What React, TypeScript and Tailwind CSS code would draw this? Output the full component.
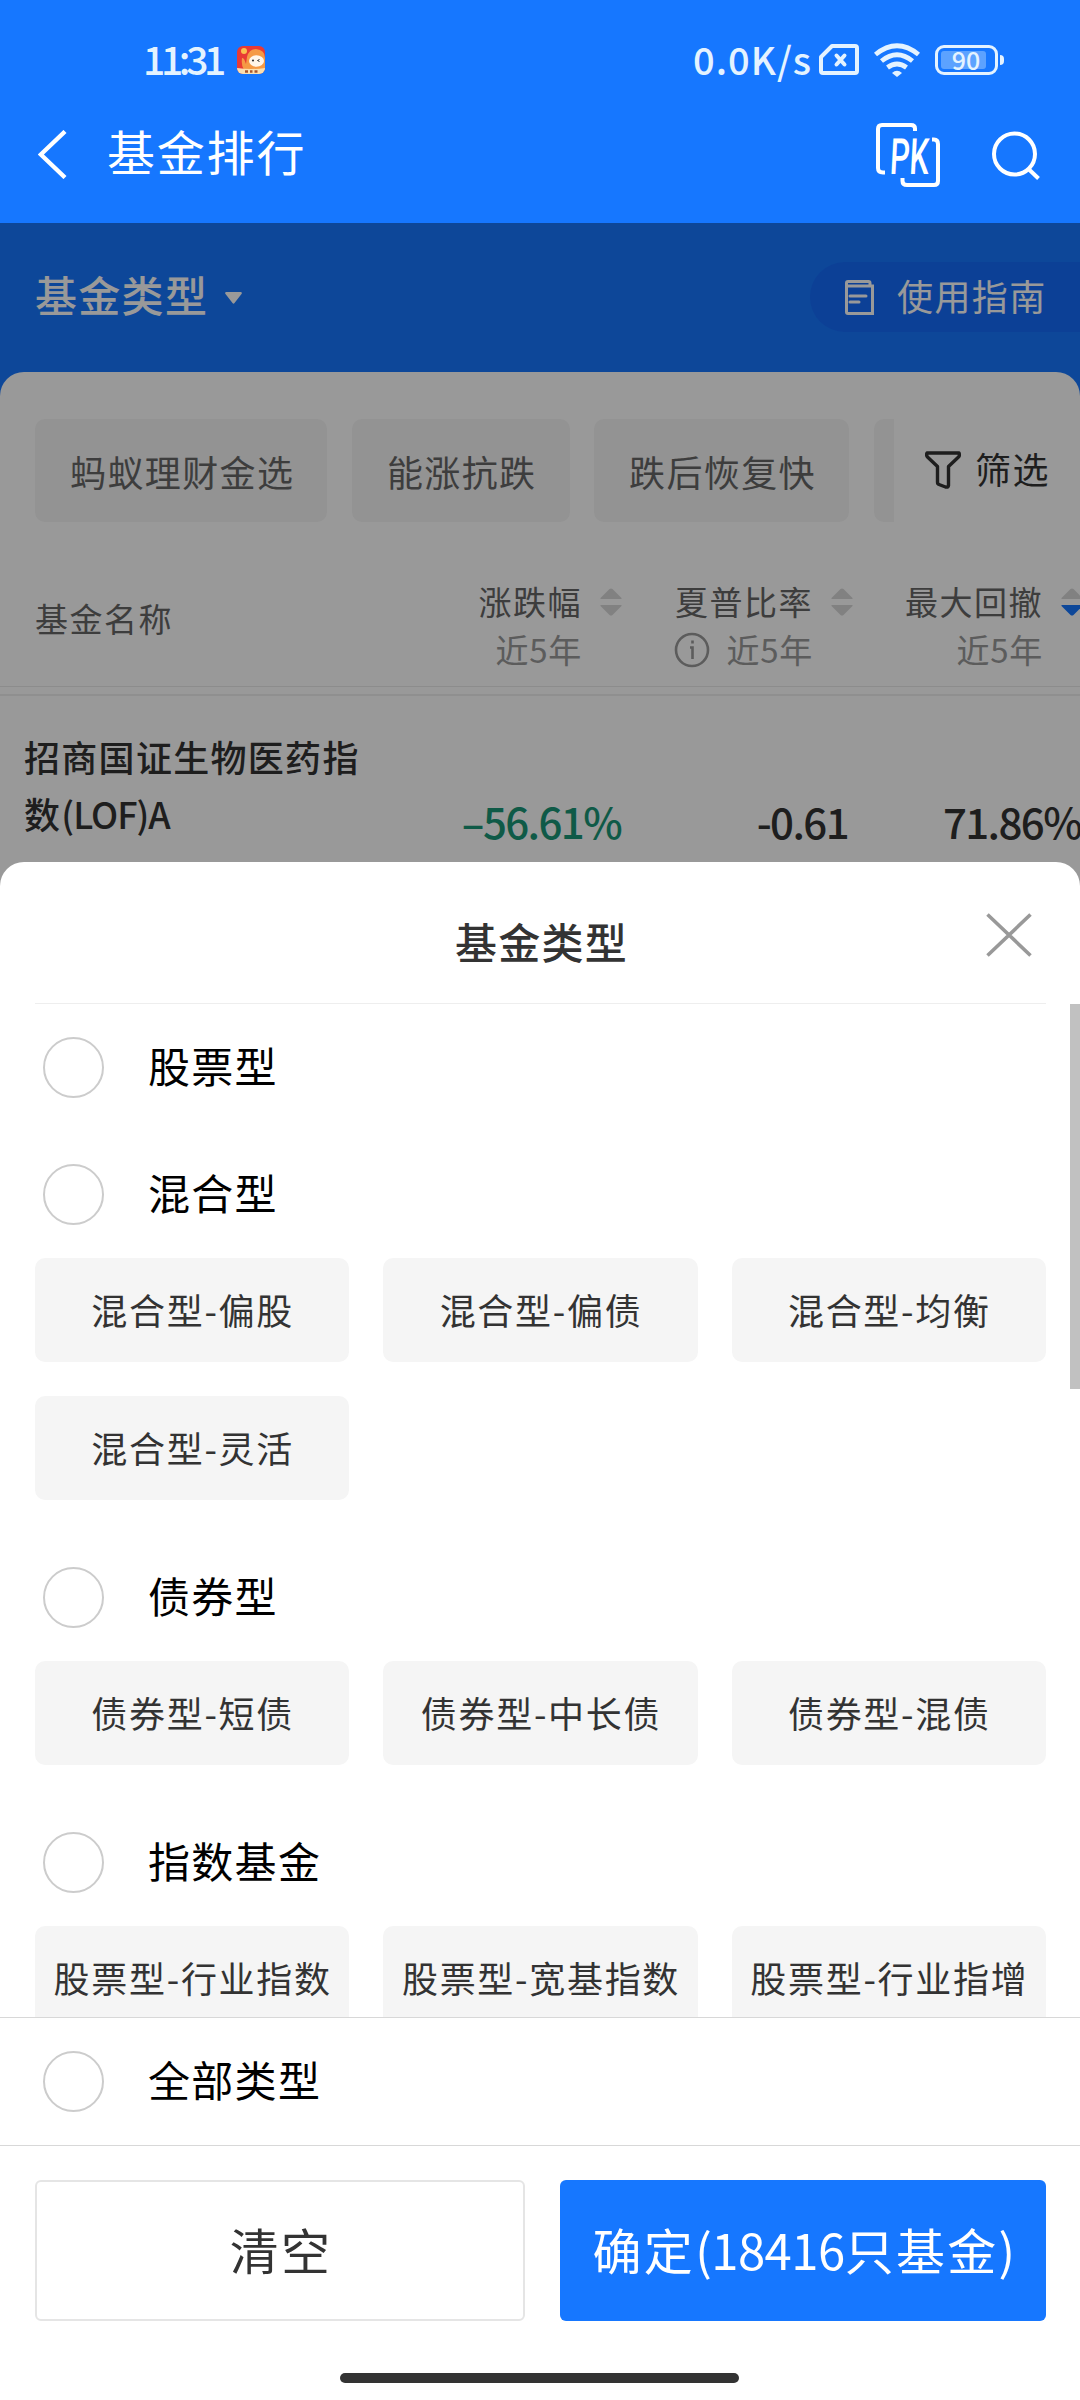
import { useState } from 'react'
import clsx from 'clsx'

type SortDirection = 'up' | 'down' | null

interface Column {
  name: string
  period: string
  sort: SortDirection
  hasInfo?: boolean
  width: string
}

interface FundGroup {
  name: string
  options: string[]
}

const QUICK_FILTERS = ['蚂蚁理财金选', '能涨抗跌', '跌后恢复快']

const COLUMNS: Column[] = [
  { name: '涨跌幅', period: '近5年', sort: null, width: 'w-[244px]' },
  { name: '夏普比率', period: '近5年', sort: null, hasInfo: true, width: 'w-[231px]' },
  { name: '最大回撤', period: '近5年', sort: 'down', width: 'w-[230px]' },
]

const GROUPS: FundGroup[] = [
  { name: '股票型', options: [] },
  { name: '混合型', options: ['混合型-偏股', '混合型-偏债', '混合型-均衡', '混合型-灵活'] },
  { name: '债券型', options: ['债券型-短债', '债券型-中长债', '债券型-混债'] },
  { name: '指数基金', options: ['股票型-行业指数', '股票型-宽基指数', '股票型-行业指增'] },
]

function StatusBar() {
  return (
    <div className="flex h-[88px] items-center pt-8 pr-[76px] pl-[143px] text-[#e4f3ff]">
      <span className="pb-[3px] text-[39px] leading-none font-medium tracking-[-4.3px]">11:31</span>
      <svg className="ml-[15px] h-7 w-7" viewBox="0 0 28 28">
        <defs>
          <clipPath id="app-icon">
            <rect width="28" height="28" rx="6" />
          </clipPath>
        </defs>
        <g clipPath="url(#app-icon)">
          <rect width="28" height="28" fill="#e83a35" />
          <path d="M10 11 Q12 3 19 3 Q28 4 28 12 V24 H7 Q4 20 5 12 Q7 11 9 18Z" fill="#f59a45" />
          <circle cx="7" cy="5" r="3" fill="#fbc04f" />
          <ellipse cx="19.500" cy="15" rx="7.5" ry="5.8" fill="#fff6ea" />
          <circle cx="16" cy="14.5" r="1.1" fill="#333" />
          <path d="M22.5 13.5 l-2 1 l2 1" stroke="#333" strokeWidth="1" fill="none" />
          <path d="M0 22 Q14 24 28 22 V28 H0Z" fill="#fbe0b0" />
          <path d="M8 25.5 h3 M13 25.5 h2.5 M17.5 25.5 h3" stroke="#a8552d" strokeWidth="2.4" />
        </g>
      </svg>
      <span className="ml-auto pb-[3px] text-[38px] leading-none font-medium tracking-[1px]">0.0K/s</span>
      <svg className="ml-[7px] h-8 w-10" viewBox="0 0 40 32" fill="none" stroke="currentColor">
        <path d="M13 2 H36 Q38 2 38 4 V27 Q38 29 36 29 H4 Q2 29 2 27 V13Z" strokeWidth="4" strokeLinejoin="round" />
        <path d="M17.500 11.500 L25.500 20.500 M25.500 11.500 L17.500 20.500" strokeWidth="4" strokeLinecap="round" />
      </svg>
      <svg className="ml-[15px] h-[34px] w-[46px]" viewBox="0 0 46 34" fill="none" stroke="currentColor" strokeWidth="4.8">
        <path d="M1.5 11.5 Q23 -6 44.5 11.5" />
        <path d="M7.5 18 Q23 5.5 38.5 18" />
        <path d="M13.5 24.5 Q23 17.5 32.5 24.5" />
        <path d="M18 30 Q23 25.5 28 30 L23 34Z" fill="currentColor" stroke="none" />
      </svg>
      <div className="ml-[15px] flex items-center gap-[2px]">
        <div className="h-[30px] w-[63px] rounded-[9px] border-[3px] border-current p-[3px]">
          <div className="relative h-full w-[45px] rounded-[3px] bg-[#5ca2ff]">
            <span className="absolute inset-x-0 -top-[4px] pl-[5px] text-center text-[25px] leading-6 font-medium">90</span>
          </div>
        </div>
        <div className="h-[10px] w-[4px] rounded-r-sm bg-current" />
      </div>
    </div>
  )
}

function NavBar() {
  return (
    <div className="flex h-[135px] items-center pr-[34px] pb-3 pl-[38px] text-white">
      <svg className="mt-[9px] h-[49px] w-[29px]" viewBox="0 0 29 49" fill="none" stroke="currentColor" strokeWidth="4.4">
        <path d="M27 1.5 L2.8 24.5 L27 47.5" />
      </svg>
      <h1 className="ml-[40px] text-[48px] leading-none tracking-[1.8px]">基金排行</h1>
      <svg className="mt-[10px] ml-auto h-[66px] w-[66px] overflow-visible" viewBox="0 0 66 66" fill="none" stroke="currentColor" strokeWidth="4" strokeLinejoin="round">
        <path d="M10 50.5 H8 Q3 50.5 3 46 V7 Q3 3 7 3 H36 Q40 3 40 6.5 V9" />
        <path d="M57 17.5 H59 Q63 17.5 63 22 V59 Q63 63 59 63 H32 Q27.500 63 27.500 59 V56" />
        <text
          x="17"
          y="52"
          transform="skewX(-3)"
          textLength="39"
          lengthAdjust="spacingAndGlyphs"
          fontSize="50"
          fill="currentColor"
          stroke="none"
          className="font-['Roboto',sans-serif] font-medium"
        >
          PK
        </text>
      </svg>
      <svg className="mt-[11px] mr-[5px] ml-[50px] h-[50px] w-[50px]" viewBox="0 0 50 50" fill="none" stroke="currentColor" strokeWidth="4">
        <circle cx="23.500" cy="24" r="20.500" />
        <path d="M37.500 39 L47.500 48.500" />
      </svg>
    </div>
  )
}

function SortIcon({ direction }: { direction: SortDirection }) {
  return (
    <svg className="h-[28px] w-[22px] shrink-0" viewBox="0 0 22 28">
      <path d="M9.500 1 Q11 0 12.500 1 L21.500 10 V11 H0.500 V10Z" fill="#d8d8d8" />
      <path
        d="M9.500 27 Q11 28 12.500 27 L21.500 18 V17 H0.500 V18Z"
        fill={direction === 'down' ? '#1677ff' : '#d8d8d8'}
      />
    </svg>
  )
}

function InfoIcon() {
  return (
    <svg className="mt-[2px] h-9 w-9" viewBox="0 0 36 36" fill="none" stroke="#999" strokeWidth="2.6">
      <circle cx="18" cy="18" r="16" />
      <path d="M16 15.500 H18.500 V27 M18.500 8.500 V11.500" />
    </svg>
  )
}

function RankingPage() {
  return (
    <div className="h-[2177px] overflow-hidden bg-[#1677ff]">
      <div className="flex h-[149px] items-center">
        <button className="flex items-center pl-[35px] text-[42px] leading-none font-medium tracking-[1.3px] text-white">
          <span className="pb-2">基金类型</span>
          <svg className="ml-[17px] h-3 w-[17px]" viewBox="0 0 17 12" fill="currentColor">
            <path d="M1 0 H16 Q17.500 0.500 16.500 2 L9.500 11 Q8.500 12.500 7.500 11 L0.500 2 Q-0.500 0.500 1 0Z" />
          </svg>
        </button>
        <button className="-mt-px ml-auto flex h-[70px] w-[270px] items-center rounded-l-full bg-[#156bfb] pl-[35px] text-[36px] leading-none tracking-[1.4px] text-white">
          <svg className="mr-[23px] h-[35px] w-[29px]" viewBox="0 0 29 35" fill="none" stroke="currentColor" strokeWidth="3">
            <path d="M25 5.500 V3 Q25 1.500 23.500 1.500 H3 Q1.500 1.500 1.500 3 V32 Q1.500 33.500 3 33.500 H27.500 V6 H2" />
            <path d="M5 16 H21 M5 22 H14" strokeLinecap="round" />
          </svg>
          <span className="pb-[5px]">使用指南</span>
        </button>
      </div>

      <div className="h-full rounded-t-[24px] bg-white pt-[47px]">
        <div className="flex h-[103px] pl-[35px]">
          <div className="flex w-[859px] gap-[24.5px] overflow-hidden text-[36px] tracking-[1.4px] text-[#666]">
            {QUICK_FILTERS.map(label => (
              <button key={label} className="h-full shrink-0 rounded-[10px] bg-[#f5f5f5] pr-[33px] pl-[35px]">
                {label}
              </button>
            ))}
            <div className="w-[218px] shrink-0 rounded-[10px] bg-[#f5f5f5]" />
          </div>
          <button className="-mt-[5px] ml-[31px] flex items-center text-[36px] tracking-[1.4px] text-[#333]">
            <svg className="mt-[3px] mr-[14px] h-[38px] w-9" viewBox="0 0 36 38" fill="none" stroke="currentColor" strokeWidth="3.400" strokeLinejoin="round">
              <path d="M2 2 H34 Q35 4.500 33.500 6 L23.500 15.500 V34.500 Q23 36.500 20.500 36 L14 33.500 Q12.500 33 12.500 31 V15.500 L2.500 6 Q1 4 2 2Z" />
            </svg>
            筛选
          </button>
        </div>

        <div className="flex h-[165px] items-end border-b border-[#eaeaea] pb-[13px] pl-[35px] text-[33px] leading-[48px] tracking-[1.500px]">
          <span className="mb-[31px] w-[343px] shrink-0 text-[#666]">基金名称</span>
          {COLUMNS.map(column => (
            <div key={column.name} className={clsx('flex shrink-0 items-start justify-end gap-[18px]', column.width)}>
              <div className="flex flex-col items-end">
                <span className="text-[#666]">{column.name}</span>
                <span className="flex items-center gap-[17px] tracking-[0.700px] text-[#999]">
                  {column.hasInfo && <InfoIcon />}
                  {column.period}
                </span>
              </div>
              <div className="pt-[11px]">
                <SortIcon direction={column.sort} />
              </div>
            </div>
          ))}
        </div>
        <div className="mt-[7px] h-[2px] bg-[#eee]" />

        <div className="flex items-end pt-8 pl-6 text-[#333]">
          <div className="w-[345px] shrink-0 text-[36px] leading-[57px] font-medium tracking-[1.300px]">
            <div>招商国证生物医药指</div>
            <div className="flex">
              <span>数</span>
              <span className="tracking-[-1px]">(LOF)A</span>
            </div>
          </div>
          <div className="-mb-[3px] flex shrink-0 text-right text-[42px] leading-[48px] font-medium tracking-[-1.600px] whitespace-nowrap">
            <span className="w-[252px] text-[#1a9677]">–56.61%</span>
            <span className="w-[227px]">-0.61</span>
            <span className="w-[233px]">71.86%</span>
          </div>
        </div>
      </div>
    </div>
  )
}

function RadioRow({ label, checked, onSelect }: { label: string; checked: boolean; onSelect: () => void }) {
  return (
    <button onClick={onSelect} className="flex h-[127px] w-full items-center pl-[43px] text-left">
      <span
        className={clsx(
          'h-[61px] w-[61px] rounded-full border-2',
          checked ? 'border-[#1677ff] bg-[#1677ff]' : 'border-[#ccc]'
        )}
      />
      <span className="ml-11 pb-1.5 text-[42px] leading-none tracking-[1.300px] text-black">{label}</span>
    </button>
  )
}

function TypeSheet({ onClose }: { onClose: () => void }) {
  const [selected, setSelected] = useState<string | null>(null)

  return (
    <div className="absolute inset-x-0 bottom-0 flex h-[1538px] flex-col rounded-t-[24px] bg-white">
      <div className="relative mr-[34px] ml-[35px] flex h-[142px] shrink-0 items-center justify-center border-b border-[#eee]">
        <h2 className="pt-4 pl-[2px] text-[42px] leading-none font-medium tracking-[1.300px] text-[#333]">基金类型</h2>
        <button onClick={onClose} className="absolute top-[51px] right-[14px]">
          <svg className="h-[44px] w-[46px]" viewBox="0 0 46 44" stroke="#999" strokeWidth="3.600">
            <path d="M1.500 1.500 L44.500 42.500 M44.500 1.500 L1.500 42.500" />
          </svg>
        </button>
      </div>

      <div className="relative min-h-0 flex-1 overflow-hidden">
        {GROUPS.map(group => (
          <section key={group.name}>
            <RadioRow
              label={group.name}
              checked={selected === group.name}
              onSelect={() => setSelected(group.name)}
            />
            {group.options.length > 0 && (
              <div className="grid grid-cols-3 gap-[34px] pr-[34px] pb-[34px] pl-[35px]">
                {group.options.map(option => (
                  <button
                    key={option}
                    onClick={() => setSelected(option)}
                    className={clsx(
                      'h-[104px] rounded-[10px] pb-[3px] pl-px text-[36px] tracking-[1.700px] whitespace-nowrap',
                      selected === option ? 'bg-[#e7f1ff] text-[#1677ff]' : 'bg-[#f5f5f5] text-[#333]'
                    )}
                  >
                    {option}
                  </button>
                ))}
              </div>
            )}
          </section>
        ))}
        {/* Scroll thumb */}
        <div className="absolute top-0 right-0 h-[385px] w-[10px] bg-[#c1c1c1]" />
      </div>

      <div className="h-[129px] shrink-0 border-y border-[#d8d8d8]">
        <RadioRow label="全部类型" checked={selected === 'all'} onSelect={() => setSelected('all')} />
      </div>

      <div className="flex shrink-0 gap-[35px] pt-[34px] pr-[34px] pl-[35px] text-[49px] tracking-[2.300px] whitespace-nowrap">
        <button
          onClick={() => setSelected(null)}
          className="h-[141px] w-[490px] rounded-[6px] border-2 border-[#e5e5e5] pb-1 pl-[2px] text-[#333]"
        >
          清空
        </button>
        <button onClick={onClose} className="h-[141px] flex-1 rounded-[6px] bg-[#1677ff] pb-1 pl-1 text-white">
          确定<span className="tracking-[-0.500px]">(18416</span>只基金)
        </button>
      </div>

      <div className="mt-[52px] mb-[17px] ml-[340px] h-[10px] w-[399px] shrink-0 rounded-full bg-[#333]" />
    </div>
  )
}

export default function App() {
  const [sheetOpen, setSheetOpen] = useState(true)

  return (
    <div className="relative h-[2400px] w-[1080px] overflow-hidden bg-white font-['Noto_Sans_CJK_SC',sans-serif]">
      <header className="h-[223px] bg-[#1677ff]">
        <StatusBar />
        <NavBar />
      </header>
      <main className="relative">
        <RankingPage />
        {sheetOpen && <div className="absolute inset-0 bg-black/40" />}
      </main>
      {sheetOpen && <TypeSheet onClose={() => setSheetOpen(false)} />}
    </div>
  )
}
